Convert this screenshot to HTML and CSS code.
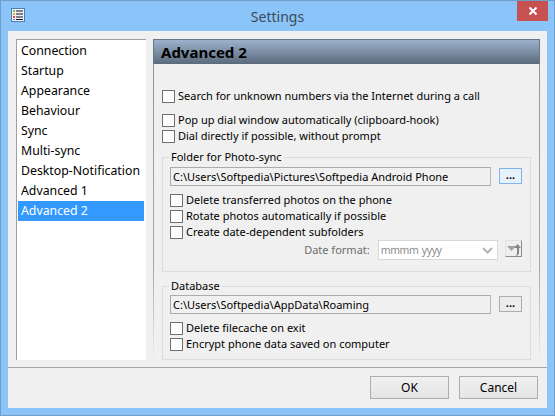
FILE: index.html
```html
<!DOCTYPE html>
<html lang="en">
<head>
<meta charset="utf-8">
<title>Settings</title>
<link rel="stylesheet" href="styles.css">
</head>
<body>
<div class="window">
  <header class="titlebar">
    <svg class="appicon" width="14" height="14" viewBox="0 0 14 14">
      <rect x="0.5" y="0.5" width="13" height="13" fill="#eef3fa" stroke="#4d7fb5"/>
      <rect x="2" y="2" width="2" height="2" fill="#5fd03a"/>
      <rect x="2" y="5" width="2" height="2" fill="#f5a623"/>
      <rect x="2" y="8" width="2" height="2" fill="#e8433a"/>
      <rect x="2" y="11" width="2" height="1" fill="#5b7be0"/>
      <path d="M5 3h7M5 6h7M5 9h7M5 11.500h7" stroke="#10101c" stroke-width="1"/>
    </svg>
    <div class="title">Settings</div>
    <div class="close"><svg width="10" height="10" viewBox="0 0 10 10"><path d="M1.500 1.500l7 7M8.500 1.500l-7 7" stroke="#fff" stroke-width="2"/></svg></div>
  </header>
  <div class="client">
    <div class="main">
      <ul class="nav">
        <li>Connection</li>
        <li>Startup</li>
        <li>Appearance</li>
        <li>Behaviour</li>
        <li>Sync</li>
        <li>Multi-sync</li>
        <li>Desktop-Notification</li>
        <li>Advanced 1</li>
        <li class="selected">Advanced 2</li>
      </ul>
      <section class="panel">
        <h1 class="panel-head">Advanced 2</h1>
        <div class="panel-body">
          <label class="check top-check"><span class="box"></span>Search for unknown numbers via the Internet during a call</label>
          <div class="check-stack spaced">
            <label class="check"><span class="box"></span>Pop up dial window automatically (clipboard-hook)</label>
            <label class="check"><span class="box"></span>Dial directly if possible, without prompt</label>
          </div>
          <fieldset class="group photo">
            <legend>Folder for Photo-sync</legend>
            <div class="path-row">
              <div class="path">C:\Users\Softpedia\Pictures\Softpedia Android Phone</div>
              <button class="dots focus">...</button>
            </div>
            <div class="check-stack">
              <label class="check"><span class="box"></span>Delete transferred photos on the phone</label>
              <label class="check"><span class="box"></span>Rotate photos automatically if possible</label>
              <label class="check"><span class="box"></span>Create date-dependent subfolders</label>
            </div>
            <div class="date-row">
              <span class="date-label">Date format:</span>
              <div class="combo">
                <span class="combo-text">mmmm yyyy</span>
                <svg width="11" height="7" viewBox="0 0 11 7"><path d="M1 1l4.500 4.500L10 1" fill="none" stroke="#b4b4b4" stroke-width="2"/></svg>
              </div>
              <div class="mini">
                <svg width="15" height="14" viewBox="0 0 15 14"><path d="M1 4h9l-4.500 5z" fill="#a0a0a0"/><path d="M8 6l3.500-4 3.500 4h-2v5q0 2-3.500 3q1.500-1.500 1.500-3V6z" fill="#858585"/></svg>
              </div>
            </div>
          </fieldset>
          <fieldset class="group database">
            <legend>Database</legend>
            <div class="path-row">
              <div class="path">C:\Users\Softpedia\AppData\Roaming</div>
              <button class="dots">...</button>
            </div>
            <div class="check-stack">
              <label class="check"><span class="box"></span>Delete filecache on exit</label>
              <label class="check"><span class="box"></span>Encrypt phone data saved on computer</label>
            </div>
          </fieldset>
        </div>
      </section>
    </div>
    <footer class="footer">
      <button class="action">OK</button>
      <button class="action">Cancel</button>
    </footer>
  </div>
</div>
</body>
</html>
```
FILE: styles.css
```css
* { box-sizing: border-box; }
html, body { margin: 0; padding: 0; }
body {
  width: 555px;
  height: 416px;
  overflow: hidden;
  font-family: "Noto Sans", "DejaVu Sans", sans-serif;
  font-size: 11px;
  color: #000;
}
.window {
  width: 555px;
  height: 416px;
  background: #8ac4f9;
  border: 1px solid #6f9cc9;
  padding: 0 7px 7px;
  display: flex;
  flex-direction: column;
}
.titlebar {
  height: 30px;
  flex: none;
  display: flex;
  align-items: flex-start;
  position: relative;
}
.appicon { margin: 7px 0 0 3px; }
.title {
  position: absolute;
  left: 0;
  right: 0;
  top: 6px;
  text-align: center;
  font-size: 14px;
  line-height: 20px;
  color: #3d4b58;
}
.close {
  position: absolute;
  right: -1px;
  top: 0;
  width: 31px;
  height: 20px;
  background: #c75050;
  display: flex;
  align-items: center;
  justify-content: center;
}
.client {
  flex: 1;
  background: #f0f0f0;
  display: flex;
  flex-direction: column;
}
.main {
  height: 337px;
  flex: none;
  padding: 8px 7px 8px 8px;
  display: flex;
  gap: 7px;
  border-bottom: 1px solid #a5a5a5;
}
.nav {
  width: 130px;
  height: 321px;
  margin: 0;
  padding: 1px 2px 0 1px;
  list-style: none;
  background: #fff;
  border-left: 1px solid #a0a0a0;
  border-top: 1px solid #a0a0a0;
  font-size: 12.3px;
}
.nav li {
  height: 20px;
  line-height: 20px;
  padding-left: 3px;
}
.nav .selected { background: #3399ff; color: #fff; }
.panel {
  width: 387px;
  height: 321px;
  display: flex;
  flex-direction: column;
}
.panel-head {
  margin: 0;
  height: 25px;
  flex: none;
  border: 1px solid #66768a;
  border-bottom: 0;
  background: linear-gradient(#9cb2cc, #5a6a7c);
  font-size: 15px;
  line-height: 24px;
  font-weight: 700;
  padding-left: 7px;
}
.panel-body {
  flex: 1;
  border-width: 0 1px;
  border-style: solid;
  border-image: linear-gradient(#8c96a0, #a8a8a8 70%, #f0f0f0) 1;
  padding: 24px 8px 0 8px;
  display: flex;
  flex-direction: column;
}
.check {
  display: flex;
  align-items: center;
  height: 16px;
  gap: 3px;
  line-height: 16px;
  white-space: nowrap;
}
.box {
  width: 13px;
  height: 13px;
  flex: none;
  background: #fff;
  border: 1px solid #707070;
}
.check-stack { display: flex; flex-direction: column; }
.spaced { margin-top: 8px; }
.group {
  margin: 0;
  padding: 0 8px 0 7px;
  border: 1px solid #dcdcdc;
  width: 369px;
  min-width: 0;
  flex: none;
}
.group legend {
  padding: 0 2px;
  margin-left: -1px;
  line-height: 14px;
  height: 14px;
}
.photo { margin-top: 6px; height: 122px; }
.database { margin-top: 7px; height: 81px; }
.path-row { display: flex; align-items: flex-start; gap: 8px; margin-top: 3px; }
.database .path-row { margin-top: 2px; }
.path {
  width: 321px;
  height: 19px;
  line-height: 17px;
  padding-left: 2px;
  border: 1px solid #ababab;
  border-right-color: #b8b8b8;
  background: #f0f0f0;
  white-space: nowrap;
}
.dots {
  width: 23px;
  height: 16px;
  margin-top: 1px;
  padding: 0 0 3px;
  font: 700 11px/12px "Noto Sans", sans-serif;
  background: #ececec;
  border: 1px solid #adadad;
}
.dots.focus { background: #e5f1fb; border-color: #7eb4ea; }
.path-row + .check-stack { margin-top: 6px; }
.date-row {
  display: flex;
  align-items: flex-start;
}
.date-label {
  width: 202px;
  text-align: right;
  color: #6d6d6d;
  line-height: 20px;
  padding-right: 1px;
}
.combo {
  width: 121px;
  height: 20px;
  margin-left: 7px;
  background: #fff;
  border: 1px solid #d9d9d9;
  color: #8c8c8c;
  line-height: 18px;
  padding: 0 4px 0 2px;
  display: flex;
  align-items: center;
  justify-content: space-between;
}
.combo-text { font-size: 10.5px; letter-spacing: -0.4px; word-spacing: 1px; }
.mini {
  width: 17px;
  height: 17px;
  margin-left: 7px;
  background: #efefef;
  border: 1px solid #e2e2e2;
  border-right-color: #8e8e8e;
  border-bottom-color: #8e8e8e;
  display: flex;
  align-items: center;
  justify-content: center;
}
.footer {
  flex: 1;
  display: flex;
  justify-content: flex-end;
  gap: 10px;
  padding: 8px 9px 0 0;
}
.action {
  width: 79px;
  height: 23px;
  border: 1px solid #adadad;
  background: linear-gradient(#f0f0f0, #e5e5e5);
  font: 12px/20px "Noto Sans", sans-serif;
  color: #000;
  padding: 0;
}
```
